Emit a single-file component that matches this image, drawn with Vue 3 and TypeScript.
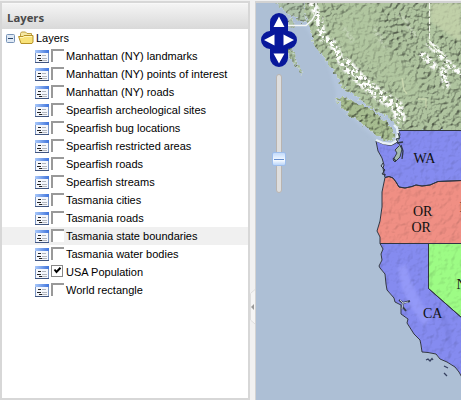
<script setup lang="ts">
import { ref } from 'vue'

interface Layer {
  name: string
  on: boolean
  hover?: boolean
}

const layers = ref<Layer[]>([
  { name: 'Manhattan (NY) landmarks', on: false },
  { name: 'Manhattan (NY) points of interest', on: false },
  { name: 'Manhattan (NY) roads', on: false },
  { name: 'Spearfish archeological sites', on: false },
  { name: 'Spearfish bug locations', on: false },
  { name: 'Spearfish restricted areas', on: false },
  { name: 'Spearfish roads', on: false },
  { name: 'Spearfish streams', on: false },
  { name: 'Tasmania cities', on: false },
  { name: 'Tasmania roads', on: false },
  { name: 'Tasmania state boundaries', on: false, hover: true },
  { name: 'Tasmania water bodies', on: false },
  { name: 'USA Population', on: true },
  { name: 'World rectangle', on: false },
])

const wa = 'M398 130.5H462V180.500L450 181L438 181.500L430 185L422 186L416 185L412 186.500L405 188L399 187L396 182L393 178L389 176.500L385 177.500L384 174L383 168L384 165L382 158L378 151L376 141L383 144L391 145.500L396 143L399 139L400 134Z'
const or = 'M385 177.500L389 176.500L393 178L396 182L399 187L405 188L412 186.500L416 185L422 186L430 185L438 181.500L450 181L462 180.500V243.500H380L380 237L377 231L380 221L382 207L382 192Z'
const ca = 'M380 243.500H428.500V288.500L462 318V377.500L459 372L455 367L447 362L440 359L436 354L428 352.500L422 352L421 345L420 340L414 334L407 323L408 319L401 314L401 305L395 302L394 298L387 290L386 284L385 274L380 268L379 266L382 260L381 254L383 249Z'
const nv = 'M428.500 243.500H462V318L428.500 288.500Z'
</script>

<template>
  <div class="app">
    <section class="panel">
      <header class="title">Layers</header>
      <div class="tree">
        <div class="row root">
          <svg class="toggle" width="9" height="9" viewBox="0 0 9 9">
            <rect x=".5" y=".5" width="8" height="8" rx="1" fill="#dfe9f5" stroke="#7792b6" />
            <path d="M2 4.500H7" stroke="#284469" />
          </svg>
          <svg class="folder" width="16" height="14" viewBox="0 0 16 14">
            <path d="M2.500 11V2.500L3.500 1H7.500L9 2.500H13.500V6" fill="#f5e8a3" stroke="#bc9e43" />
            <path d="M4 5.500H.6L3 12.500H14L15 11V4.500H6L5 5.500Z" fill="#f8e279" stroke="#b69227" />
            <path d="M2 6.500H5.500L6.500 5.500H14" stroke="#fff6bd" fill="none" />
          </svg>
          <span>Layers</span>
        </div>
        <div v-for="layer in layers" :key="layer.name" class="row" :class="{ hover: layer.hover }">
          <svg class="doc" width="14" height="13" viewBox="0 0 14 13">
            <defs>
              <linearGradient id="cap" x1="0" x2="1"><stop stop-color="#a9c8fa" /><stop offset="1" stop-color="#3f74dc" /></linearGradient>
            </defs>
            <rect x=".5" y=".5" width="13" height="12" fill="#f5f7fc" stroke="#7d97c4" />
            <rect width="14" height="3" fill="url(#cap)" />
            <path d="M0 12.500H14" stroke="#40557f" />
            <path d="M3 5.500H6M2 8.500H6M4 10.500H7" stroke="#222" />
            <path d="M7 5.500H11M7 8.500H12M7 10.500H12" stroke="#b1b5bd" />
          </svg>
          <span class="check" :class="{ on: layer.on }" @click="layer.on = !layer.on">
            <svg v-if="layer.on" width="9" height="9" viewBox="0 0 9 9">
              <path d="M1.500 3.500L3.500 6L7.500 1.800" fill="none" stroke="#000" stroke-width="2" />
            </svg>
          </span>
          <span>{{ layer.name }}</span>
        </div>
      </div>
    </section>

    <div class="splitter">
      <svg width="5" height="36" viewBox="0 0 5 36">
        <path d="M5 .5L.5 4.500V31L5 35" fill="#f5f5f5" stroke="#dedede" />
        <path d="M4 15V21L1 18Z" fill="#999" />
      </svg>
    </div>

    <main class="map">
      <svg class="terrain" width="205" height="397" viewBox="256 3 205 397">
        <defs>
          <filter id="relief" x="0" y="0" width="100%" height="100%" color-interpolation-filters="sRGB">
            <feTurbulence type="fractalNoise" baseFrequency=".24" numOctaves="3" seed="8" result="n" />
            <feDiffuseLighting in="n" surfaceScale="2.100" lighting-color="#fff" result="l">
              <feDistantLight azimuth="225" elevation="55" />
            </feDiffuseLighting>
            <feColorMatrix in="l" type="matrix" values="1 0 0 0 .17  0 1 0 0 .17  0 0 1 0 .17  0 0 0 0 1" result="m" />
            <feBlend in="SourceGraphic" in2="m" mode="multiply" result="b" />
            <feComposite in="b" in2="SourceGraphic" operator="in" />
          </filter>
          <filter id="soft" x="0" y="0" width="100%" height="100%" color-interpolation-filters="sRGB">
            <feTurbulence type="fractalNoise" baseFrequency=".16" numOctaves="3" seed="3" result="n" />
            <feDiffuseLighting in="n" surfaceScale=".6" lighting-color="#fff" result="l">
              <feDistantLight azimuth="225" elevation="60" />
            </feDiffuseLighting>
            <feColorMatrix in="l" type="matrix" values="1 0 0 0 .13  0 1 0 0 .13  0 0 1 0 .13  0 0 0 0 1" result="m" />
            <feBlend in="SourceGraphic" in2="m" mode="multiply" result="b" />
            <feComposite in="b" in2="SourceGraphic" operator="in" />
          </filter>
          <filter id="ragged" x="-20%" y="-20%" width="140%" height="140%">
            <feTurbulence type="fractalNoise" baseFrequency=".28" numOctaves="2" seed="5" result="n" />
            <feDisplacementMap in="SourceGraphic" in2="n" scale="7" xChannelSelector="R" yChannelSelector="G" />
          </filter>
          <filter id="speckle" x="-20%" y="-20%" width="140%" height="140%" color-interpolation-filters="sRGB">
            <feTurbulence type="fractalNoise" baseFrequency=".3" numOctaves="2" seed="12" result="n" />
            <feColorMatrix in="n" type="matrix" values="0 0 0 0 1  0 0 0 0 1  0 0 0 0 1  9 0 0 0 -4.100" result="m" />
            <feGaussianBlur in="SourceGraphic" stdDeviation="1.200" result="s" />
            <feComposite in="s" in2="m" operator="in" />
          </filter>
          <filter id="blur"><feGaussianBlur stdDeviation="5" /></filter>
          <filter id="haze"><feGaussianBlur stdDeviation="1.600" /></filter>
        </defs>

        <rect x="256" y="3" width="205" height="397" fill="#adbfd5" />
        <path d="M296 3L306 28L328 65L336 92L335 102L362 128L378 141L396 145L400 130L360 90L320 30Z" fill="#b3c5dc" filter="url(#haze)" />

        <g filter="url(#relief)">
          <g filter="url(#ragged)">
            <path d="M304 -4L305 12L309 26L311 35L316 48L324 57L329 65L337 75L341 87L351 93L362 101L373 109L385 115L393 122L400 131H475V-6Z" fill="#afc49f" />
            <path d="M273 0H303L307 23L302 22L296 17L289 15L281 8Z" fill="#afc3a9" />
            <path d="M286 22L291 17L296 25L292 28Z" fill="#afc3a9" />
            <path d="M287 44L293 51L297 63L304 74L301 73L295 65L288 55Z" fill="#a9bf9f" />
            <path d="M335 98L344 97L354 102L368 107L381 117L391 126L395 136L391 141L382 139L368 129L357 121L350 116L341 107Z" fill="#a7bd90" />
          </g>
        </g>
        <path d="M330 30L350 5L380 3L375 35L410 70L425 90L412 100L390 83L365 62L340 50Z" fill="#b2c8a0" opacity=".6" filter="url(#blur)" />
        <path d="M431 3H461V42L446 33L431 22Z" fill="#c5d3ab" opacity=".8" filter="url(#haze)" />
        <g fill="none" stroke="#fff" stroke-linecap="round" filter="url(#speckle)">
          <path d="M311 0L315 9L319 20L323 38L333 44L340 59L346 68" stroke-width="8" />
          <path d="M346 64L352 71L362 81L373 90L384 98L397 106L400 118" stroke-width="12" />
          <path d="M423 55L434 66M430 44L441 55L450 66L463 75M443 70L446 85" stroke-width="7" />
          <path d="M345 30L352 40M375 30L385 45M400 15L415 35" stroke-width="5" opacity=".25" />
        </g>
        <path d="M402 78L404 90L407 94M418 99H426V108" stroke="#cfdcb4" stroke-width="1.500" fill="none" opacity=".8" />
        <path d="M288 25.500H306L312 20L316 13V3" fill="none" stroke="#f4f7f6" stroke-width="1.500" />
        <path d="M429.500 3V43L438 51L445 55" fill="none" stroke="#f2f6ea" stroke-width="1.200" stroke-dasharray="6 1.500" />

        <g filter="url(#soft)">
          <path :d="wa" fill="#858bf0" />
          <path :d="or" fill="#f08f84" />
          <path :d="ca" fill="#858bf0" />
          <path :d="nv" fill="#9dfc85" />
        </g>
        <path d="M398 268L406 264L410 279L420 299L430 319L424 326L410 306L402 289Z" fill="#9a9ffc" opacity=".7" filter="url(#haze)" />
        <path d="M437 308L446 322L450 345" stroke="#6c72cc" stroke-width="3" opacity=".4" fill="none" filter="url(#haze)" />
        <g fill="none" stroke="#303542" stroke-width="1" stroke-linejoin="round">
          <path :d="wa" /><path :d="or" /><path :d="ca" /><path :d="nv" />
          <path d="M383 163L381 166L385 170L382 174L386 175" />
        </g>
        <path d="M376 140L383 143L391 144L396 141L398 134L397 128L394 125" fill="none" stroke="#e9f2f7" stroke-width="2.400" stroke-linejoin="round" />
        <path d="M398 133L400 138L396 139L399 144L402 149L400 157L395 162L393 160L397 153L395 150L399 146" fill="#a2b8ae" stroke="#343c4a" stroke-width="1" />
        <path d="M397 143L403 142M401 145L403 151L402 159M396 161L393 158" fill="none" stroke="#303848" stroke-width="1.300" />
        <path d="M399 300L403 303L402 309M403 303L410 301M402 306L406 311" fill="none" stroke="#39404d" stroke-width="2" />
        <path d="M400 300L403 303L402 309M403 303L408 302" fill="none" stroke="#b9c6d6" stroke-width="1" />
        <path d="M426 360L428 359L430 361L432 358.500L433 360M444 366L448 368M444 373L447 376" fill="none" stroke="#354060" stroke-width="1.300" />

        <g class="labels">
          <text x="413.500" y="163">WA</text>
          <text x="413" y="215.500">OR</text>
          <text x="411.500" y="231.500">OR</text>
          <text x="423" y="318">CA</text>
          <text x="456.500" y="288.500">NV</text>
          <text x="459.500" y="212">ID</text>
        </g>
      </svg>

      <svg class="pan" width="36" height="54" viewBox="0 0 36 54">
        <path d="M9 18V9A9 9 0 0 1 27 9V18A9 9 0 0 1 27 36V45A9 9 0 0 1 9 45V36A9 9 0 0 1 9 18Z" fill="#08189b" />
        <path d="M18 3.500L23.500 14H12.500ZM12.500 40.500H23.500L18 50.500ZM3 27L13.500 21.500V32.500ZM33 27L22.500 21.500V32.500Z" fill="#fff" />
      </svg>
      <div class="zoom">
        <div class="thumb"></div>
      </div>
    </main>
  </div>
</template>

<style>
body {
  margin: 0;
  overflow: hidden;
}
</style>

<style scoped>
.app {
  display: flex;
  box-sizing: border-box;
  width: 461px;
  height: 400px;
  padding-top: 1px;
  overflow: hidden;
  background: #f1f1f1;
  font: 11px "Liberation Sans", Arial, sans-serif;
  color: #000;
}
.panel {
  box-sizing: border-box;
  width: 250px;
  height: 399px;
  border: 2px solid #d7d7d7;
  background: #fff;
}
.title {
  box-sizing: border-box;
  height: 26px;
  padding: 1px 0 0 5px;
  border-top: 1px solid #f8f8f8;
  background: linear-gradient(#f4f4f4, #d9d9d9);
  color: #4a4a4a;
  font: bold 11.3px/25px "Open Sans", sans-serif;
}
.row {
  display: flex;
  align-items: flex-start;
  height: 18px;
  padding-left: 33px;
  line-height: 19px;
  white-space: nowrap;
}
.row.hover {
  background: #f0f0f0;
}
.root {
  padding-left: 4px;
}
.toggle {
  margin-top: 5px;
}
.folder {
  margin: 2px 2px 0 3px;
}
.doc {
  margin: 3px 2px 0 0;
}
.check {
  box-sizing: border-box;
  width: 13px;
  height: 13px;
  margin: 2px 2px 0 0;
  border: solid #999;
  border-width: 2px 0 0 2px;
  background: #fff;
}
.check.on {
  width: 12px;
  height: 12px;
  margin-right: 3px;
  border: 1px solid #888;
}
.check svg {
  display: block;
  margin-left: 1px;
}
.splitter {
  display: flex;
  box-sizing: border-box;
  width: 6px;
  padding-top: 288px;
  border-right: 1px solid #d2d2d2;
}
.splitter svg {
  flex: none;
}
.map {
  position: relative;
  box-sizing: border-box;
  width: 205px;
  height: 399px;
  border-top: 2px solid #d2d2d2;
  overflow: hidden;
}
.terrain {
  display: block;
}
.labels {
  font: 14px "Liberation Serif", serif;
  fill: #111;
}
.pan {
  position: absolute;
  left: 5px;
  top: 10px;
}
.zoom {
  position: absolute;
  left: 20px;
  top: 71px;
  box-sizing: border-box;
  width: 6px;
  height: 119px;
  border: 1px solid #b9b4b0;
  border-radius: 3px;
  background: #dedede;
}
.thumb {
  position: absolute;
  left: -5px;
  top: 77px;
  box-sizing: border-box;
  display: flex;
  align-items: center;
  justify-content: center;
  width: 14px;
  height: 14px;
  border: 1px solid #9dbdeb;
  border-radius: 2px;
  background: linear-gradient(#c2dbfc, #f7fbff 60%, #b9d5fb);
}
.thumb::before {
  content: "";
  width: 10px;
  height: 1px;
  background: #668fd0;
}
</style>
